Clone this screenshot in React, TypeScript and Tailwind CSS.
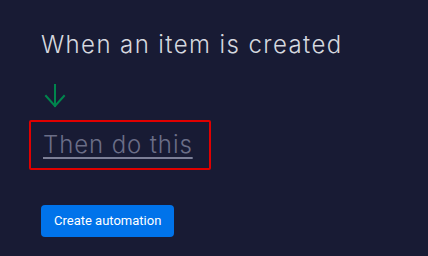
import React from 'react';

const ArrowDown = () => (
  <svg width="22" height="26" viewBox="0 0 22 26" fill="none" stroke="#00854d" strokeWidth="2" strokeLinecap="square">
    <path d="M11 2v21" />
    <path d="M2 13l9 10 9-10" />
  </svg>
);

export default function App() {
  return (
    <div className="w-[428px] h-[256px] bg-[#181b34] overflow-hidden font-['Inter',sans-serif]">
      <div className="flex flex-col items-start pl-[41px] pt-[30px]">
        <h1 className="text-[24px] leading-[30px] font-light text-[#d5d8df] tracking-[1.4px]">
          When an item is created
        </h1>
        <div className="mt-[23px] ml-[3px]">
          <ArrowDown />
        </div>
        <div className="-ml-[12px] mt-[11px] w-[182px] h-[50px] border-2 border-[#e00000] rounded-[2px] flex items-center pl-[12px]">
          <a href="#" className="text-[24px] leading-[30px] font-light text-[#6b6e87] tracking-[0.9px] underline decoration-[#7c7f97] decoration-[2px] underline-offset-[4px]">
            Then do this
          </a>
        </div>
        <button className="mt-[35px] h-[32px] px-[13px] rounded-[4px] bg-[#0073ea] text-white text-[13px] font-['Roboto',sans-serif]">
          Create automation
        </button>
      </div>
    </div>
  );
}
